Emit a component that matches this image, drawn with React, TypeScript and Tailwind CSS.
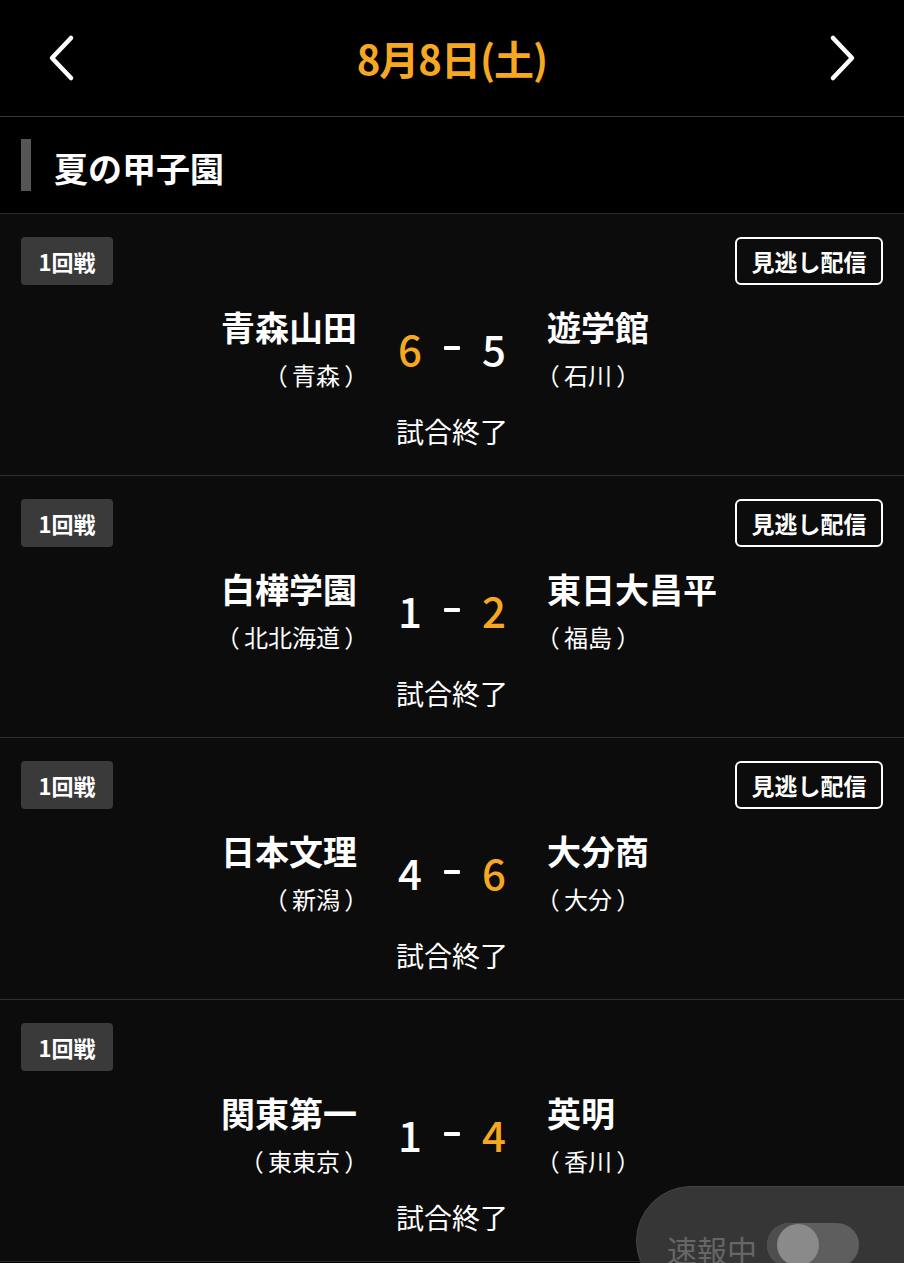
import React from 'react';

type Game = {
    round: string;
    home: string;
    homePref: string;
    away: string;
    awayPref: string;
    homeScore: number;
    awayScore: number;
    replay: boolean;
};

const games: Game[] = [
    { round: '1回戦', home: '青森山田', homePref: '青森', away: '遊学館', awayPref: '石川', homeScore: 6, awayScore: 5, replay: true },
    { round: '1回戦', home: '白樺学園', homePref: '北北海道', away: '東日大昌平', awayPref: '福島', homeScore: 1, awayScore: 2, replay: true },
    { round: '1回戦', home: '日本文理', homePref: '新潟', away: '大分商', awayPref: '大分', homeScore: 4, awayScore: 6, replay: true },
    { round: '1回戦', home: '関東第一', homePref: '東東京', away: '英明', awayPref: '香川', homeScore: 1, awayScore: 4, replay: false },
];

const font = "font-['Noto_Sans_CJK_JP','Noto_Sans',sans-serif]";

function Chevron({ dir }: { dir: 'left' | 'right' }) {
    return (
        <svg width="30" height="48" viewBox="0 0 30 48" fill="none">
            <polyline
                points={dir === 'left' ? '25,4 6,24 25,44' : '5,4 24,24 5,44'}
                stroke="white"
                strokeWidth="4.5"
                strokeLinecap="round"
                strokeLinejoin="round"
            />
        </svg>
    );
}

function Pref({ name }: { name: string }) {
    return (
        <div className="text-white text-[24px] leading-[30px] mt-[11px] [font-feature-settings:'palt']">
            <span>（</span>
            <span className="mx-[5px]">{name}</span>
            <span>）</span>
        </div>
    );
}

function GameCard({ game }: { game: Game }) {
    const homeWin = game.homeScore > game.awayScore;
    return (
        <div className="bg-[#0c0c0c] border-b border-[#2e2e2e] pt-[23px] pb-[26px]">
            <div className="flex justify-between items-center h-[48px] px-[21px]">
                <div className="h-[48px] w-[92px] rounded-[4px] bg-[#3a3a3a] flex items-center justify-center text-white text-[22px] font-bold">
                    {game.round}
                </div>
                {game.replay && (
                    <div className="h-[48px] w-[148px] rounded-[6px] border-2 border-white flex items-center justify-center text-white text-[23px] font-bold">
                        見逃し配信
                    </div>
                )}
            </div>
            <div className="grid grid-cols-[1fr_190px_1fr] mt-[20px]">
                <div className="flex flex-col items-end">
                    <div className="text-white text-[34px] font-bold leading-[44px]">{game.home}</div>
                    <Pref name={game.homePref} />
                </div>
                <div className="flex items-center justify-center gap-[22px] text-[42px] font-medium">
                    <span className={homeWin ? 'text-[#f6a821]' : 'text-white'}>{game.homeScore}</span>
                    <span className="w-[16px] h-[4px] rounded-[1px] bg-white" />
                    <span className={!homeWin ? 'text-[#f6a821]' : 'text-white'}>{game.awayScore}</span>
                </div>
                <div className="flex flex-col items-start">
                    <div className="text-white text-[34px] font-bold leading-[44px]">{game.away}</div>
                    <Pref name={game.awayPref} />
                </div>
            </div>
            <div className="text-center text-white text-[28px] leading-[36px] mt-[23px]">試合終了</div>
        </div>
    );
}

export default function App() {
    return (
        <div className={`${font} bg-black min-h-[1263px] w-[904px] overflow-hidden`}>
            <header className="h-[117px] flex items-center justify-between px-[46px] border-b border-[#3a3a3a]">
                <Chevron dir="left" />
                <div className="text-[#f6a821] text-[40px] font-bold tracking-[-1px]">8月8日(土)</div>
                <Chevron dir="right" />
            </header>
            <div className="h-[97px] flex items-center px-[21px] border-b border-[#2a2a2a]">
                <div className="w-[10px] h-[52px] bg-[#555555]" />
                <div className="ml-[23px] text-white text-[34px] font-bold pt-[4px]">夏の甲子園</div>
            </div>
            {games.map((g, i) => (
                <GameCard key={i} game={g} />
            ))}
            <div className="fixed left-[636px] top-[1186px] w-[300px] h-[110px] rounded-tl-[56px] rounded-bl-[56px] bg-[#363636] border border-[#444444] flex items-start pl-[30px] gap-[10px] pt-[36px]">
                <span className="text-[#666666] text-[30px] leading-[40px] mt-[6px]">速報中</span>
                <div className="relative w-[92px] h-[44px] rounded-full bg-[#5e5e5e]">
                    <div className="absolute left-0 top-0 w-[44px] h-[44px] rounded-full bg-[#4e4e4e]" />
                    <div className="absolute left-[10px] top-[1px] w-[42px] h-[42px] rounded-full bg-[#8a8a8a]" />
                </div>
            </div>
        </div>
    );
}
